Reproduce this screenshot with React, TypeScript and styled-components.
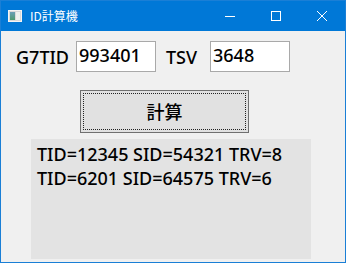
import React, { useState } from "react"
import styled, { createGlobalStyle } from "styled-components"

const Global = createGlobalStyle`
  html, body {
    margin: 0;
    padding: 0;
    background: #f0f0f0;
  }
  * { box-sizing: border-box; }
`
const Window = styled.div`
  width: 346px;
  height: 263px;
  border: 1px solid #1a7fd6;
  background: #f0f0f0;
  display: flex;
  flex-direction: column;
  font-family: "Noto Sans", "Noto Sans CJK JP", sans-serif;
  font-weight: 500;
  color: #000;
`
const TitleBar = styled.div`
  height: 30px;
  background: #0078d7;
  display: flex;
  align-items: center;
  color: #fff;
  font-weight: 400;
`
const AppIcon = styled.svg`
  width: 14px;
  height: 12px;
  margin-left: 7px;
  margin-right: 8px;
`
const Title = styled.div`
  flex: 1;
  font-family: "Noto Sans CJK JP", sans-serif;
  font-size: 12px;
  line-height: 1;
  margin-top: -1px;
`
const Caption = styled.div`
  width: 46px;
  height: 30px;
  display: flex;
  align-items: center;
  justify-content: center;
`
const Client = styled.div`
  flex: 1;
  display: flex;
  flex-direction: column;
  padding: 10px 0 0 15px;
`
const Row = styled.div`
  display: flex;
  align-items: center;
  height: 31px;
`
const Label = styled.label<{ w: number; ml?: number }>`
  width: ${p => p.w}px;
  margin-left: ${p => p.ml ?? 0}px;
  font-size: 18px;
  line-height: 1;
  padding-top: 1px;
`
const Field = styled.input`
  width: 80px;
  height: 31px;
  border: 1px solid #a9a9a9;
  background: #fff;
  font-family: "Noto Sans", sans-serif;
  font-weight: 500;
  font-size: 18px;
  padding: 0 0 3px 2px;
  outline: none;
  color: #000;
`
const Button = styled.button`
  margin: 18px 0 0 64px;
  width: 169px;
  height: 43px;
  border: 1px solid #707070;
  background: #e1e1e1;
  padding: 2px;
  font-family: "Noto Sans CJK JP", sans-serif;
  font-size: 18px;
  font-weight: 500;
  color: #000;
`
const FocusRect = styled.div`
  height: 100%;
  border: 1px dotted #222;
  display: flex;
  align-items: center;
  justify-content: center;
  padding-bottom: 1px;
`
const Output = styled.div`
  margin: 6px 0 0 15px;
  width: 280px;
  height: 120px;
  background: #e3e3e3;
  padding: 3px 6px;
  font-size: 18px;
  line-height: 24px;
`

function App() {
  const [g7tid, setG7tid] = useState("993401")
  const [tsv, setTsv] = useState("3648")
  const lines = [
    "TID=12345 SID=54321 TRV=8",
    "TID=6201 SID=64575 TRV=6",
  ]
  return (
    <>
      <Global />
      <Window>
        <TitleBar>
          <AppIcon viewBox="0 0 14 12">
            <rect x="0" y="0" width="14" height="12" fill="#f4f4f4" />
            <rect x="1" y="1" width="12" height="10" fill="#d9d9d9" />
            <defs>
              <linearGradient id="g" x1="0" y1="0" x2="0" y2="1">
                <stop offset="0" stopColor="#6aa0b8" />
                <stop offset="1" stopColor="#4e9a6e" />
              </linearGradient>
            </defs>
            <rect x="2" y="2" width="5" height="8" fill="url(#g)" />
            <rect x="8" y="2" width="4" height="8" fill="#eef2ee" />
          </AppIcon>
          <Title>ID計算機</Title>
          <Caption>
            <svg width="10" height="10" viewBox="0 0 10 10">
              <path d="M0 5.5H10" stroke="#fff" strokeWidth="1" />
            </svg>
          </Caption>
          <Caption>
            <svg width="10" height="10" viewBox="0 0 10 10">
              <rect x="0.5" y="0.5" width="9" height="9" fill="none" stroke="#fff" strokeWidth="1" />
            </svg>
          </Caption>
          <Caption>
            <svg width="10" height="10" viewBox="0 0 10 10">
              <path d="M0 0L10 10M10 0L0 10" stroke="#fff" strokeWidth="1" />
            </svg>
          </Caption>
        </TitleBar>
        <Client>
          <Row>
            <Label w={60}>G7TID</Label>
            <Field value={g7tid} onChange={e => setG7tid(e.currentTarget.value)} />
            <Label w={44} ml={10}>TSV</Label>
            <Field value={tsv} onChange={e => setTsv(e.currentTarget.value)} />
          </Row>
          <Button>
            <FocusRect>計算</FocusRect>
          </Button>
          <Output>
            {lines.map(l => <div key={l}>{l}</div>)}
          </Output>
        </Client>
      </Window>
    </>
  )
}

export default App
